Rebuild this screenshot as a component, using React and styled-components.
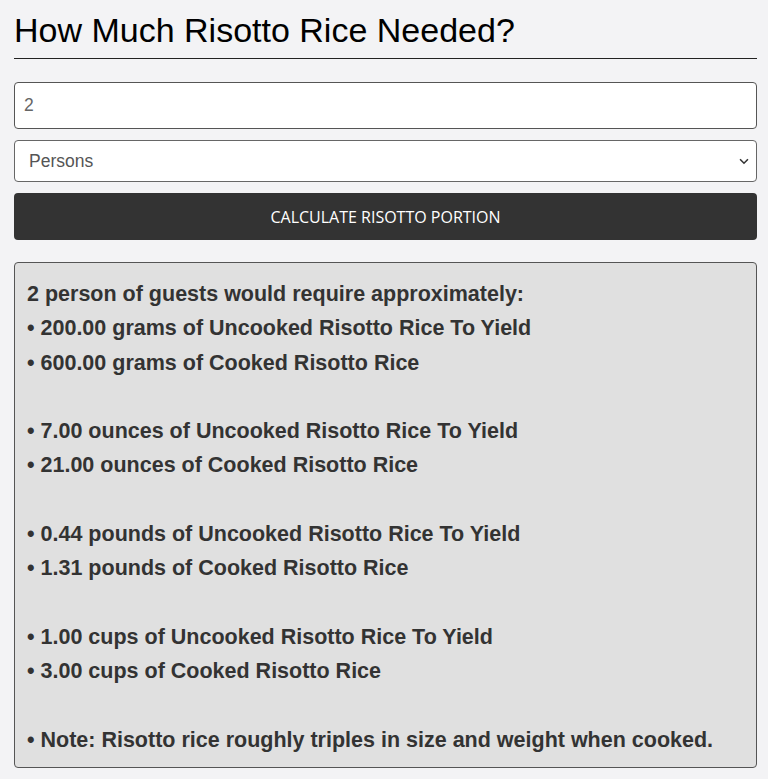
import React, { useState } from "react"
import styled, { createGlobalStyle } from "styled-components"

const GlobalStyle = createGlobalStyle`
  html, body {
    margin: 0;
    background: #f3f3f5;
  }
  * {
    box-sizing: border-box;
  }
`

const Page = styled.div`
  padding: 0 11px 0 14px;
  font-family: "Liberation Sans", Arial, sans-serif;
`

const Title = styled.h1`
  margin: 0;
  padding: 13px 0 10px;
  font-size: 34px;
  font-weight: normal;
  color: #000;
  border-bottom: 1px solid #222;
  line-height: 35px;
`

const Form = styled.form`
  display: flex;
  flex-direction: column;
  gap: 11px;
  margin-top: 23px;
`

const NumberInput = styled.input`
  height: 47px;
  padding: 0 9px;
  border: 1px solid #555;
  border-radius: 4px;
  background: #fff;
  font-family: "Liberation Sans", Arial, sans-serif;
  font-size: 17.5px;
  color: #666;
  outline: none;
`

const SelectWrap = styled.div`
  position: relative;
`

const Select = styled.select`
  display: block;
  width: 100%;
  height: 42px;
  padding: 0 14px;
  border: 1px solid #666;
  border-radius: 4px;
  background: #fff;
  appearance: none;
  font-family: "Liberation Sans", Arial, sans-serif;
  font-size: 17.5px;
  color: #555;
  outline: none;
`

const Chevron = styled.svg`
  position: absolute;
  right: 6px;
  top: 50%;
  transform: translateY(-50%);
  pointer-events: none;
`

const Button = styled.button`
  height: 47px;
  border: none;
  border-radius: 4px;
  background: #333;
  color: #fff;
  font-family: "Open Sans", sans-serif;
  font-size: 16px;
  text-transform: uppercase;
  cursor: pointer;
`

const Result = styled.div`
  margin-top: 22px;
  padding: 14px 12px 10px;
  border: 1px solid #555;
  border-radius: 4px;
  background: #e0e0e0;
  color: #333;
  font-weight: bold;
  font-size: 21.5px;
  line-height: 34.3px;
`

const Line = styled.div`
  min-height: 34.3px;
  margin-top: ${(p) => (p.$gap ? "34.3px" : "0")};
`

const units = [
  { name: "grams", raw: "200.00", cooked: "600.00" },
  { name: "ounces", raw: "7.00", cooked: "21.00" },
  { name: "pounds", raw: "0.44", cooked: "1.31" },
  { name: "cups", raw: "1.00", cooked: "3.00" },
]

export default function App() {
  const [count, setCount] = useState("2")
  const [kind, setKind] = useState("Persons")

  return (
    <Page>
      <GlobalStyle />
      <Title>How Much Risotto Rice Needed?</Title>
      <Form onSubmit={(e) => e.preventDefault()}>
        <NumberInput type="text" value={count} onChange={(e) => setCount(e.target.value)} />
        <SelectWrap>
          <Select value={kind} onChange={(e) => setKind(e.target.value)}>
            <option>Persons</option>
            <option>Servings</option>
          </Select>
          <Chevron width="14" height="14" viewBox="0 0 16 16">
            <path d="M3.5 6l4.5 4.5L12.5 6" fill="none" stroke="#333" strokeWidth="1.8" />
          </Chevron>
        </SelectWrap>
        <Button type="submit">Calculate Risotto Portion</Button>
      </Form>
      <Result>
        <Line>{count} person of guests would require approximately:</Line>
        {units.map((u, i) => (
          <React.Fragment key={u.name}>
            <Line $gap={i > 0}>• {u.raw} {u.name} of Uncooked Risotto Rice To Yield</Line>
            <Line>• {u.cooked} {u.name} of Cooked Risotto Rice</Line>
          </React.Fragment>
        ))}
        <Line $gap>• Note: Risotto rice roughly triples in size and weight when cooked.</Line>
      </Result>
    </Page>
  )
}
